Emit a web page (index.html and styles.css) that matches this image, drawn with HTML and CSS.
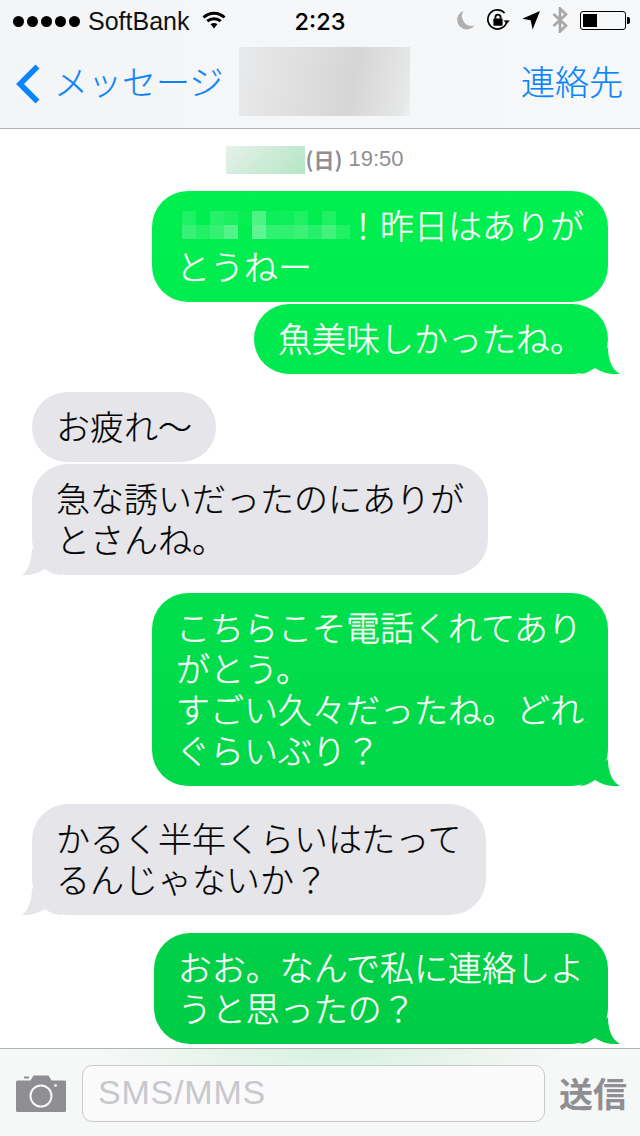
FILE: index.html
```html
<!DOCTYPE html>
<html lang="ja">
<head>
<meta charset="utf-8">
<title>メッセージ</title>
<link rel="stylesheet" href="styles.css">
</head>
<body>
<div class="phone">
  <header class="top">
    <div class="status">
      <div class="status-left">
        <div class="signal"><i></i><i></i><i></i><i></i><i></i></div>
        <span class="carrier">SoftBank</span>
        <svg class="wifi" width="24" height="18" viewBox="0 0 24 18"><path class="wifi-arc" d="M1.5 6.5C7.5 .9 16.5 .9 22.5 6.5"/><path class="wifi-arc" d="M5.3 10.2C9.2 6.8 14.8 6.8 18.7 10.2"/><path class="wifi-fill" d="M8.6 13.2C10.6 11.6 13.4 11.6 15.4 13.2L12 17.5Z"/></svg>
      </div>
      <div class="clock">2:23</div>
      <div class="status-right">
        <svg class="moon" width="20" height="20" viewBox="0 0 20 20"><path d="M8.5 .8A9.6 9.6 0 1 0 19.6 15.4 9.8 9.8 0 0 1 8.5 .8Z"/></svg>
        <svg class="rot" width="24" height="24" viewBox="0 0 24 24"><path class="rot-ring" d="M21 12.5A9.6 9.6 0 1 1 18.6 5"/><path class="rot-fill" d="M17.6 12.5h6.2l-3.1 3.6Z"/><rect class="rot-fill" x="7.4" y="10.6" width="9.2" height="7.2" rx=".8"/><path class="rot-shackle" d="M9.4 10.8V9.2a2.6 2.6 0 0 1 5.2 0v1.6"/></svg>
        <svg class="arrow" width="18" height="20" viewBox="0 0 18 20"><path d="M18 1 10.6 19.4 8.7 10.2 .2 8.8Z"/></svg>
        <svg class="bt" width="16" height="26" viewBox="0 0 16 26"><path d="M1.5 7 14 18.5 8 24.5V1.5L14 7.5 1.5 19"/></svg>
        <div class="battery"><div class="battery-body"><div class="battery-level"></div></div><div class="battery-nub"></div></div>
      </div>
    </div>
    <nav class="nav">
      <div class="back">
        <svg class="chevron" width="26" height="40" viewBox="0 0 26 40"><path d="M22.5 2.5 5 20 22.5 37.5"/></svg>
        <span class="nav-link back-label">メッセージ</span>
      </div>
      <div class="title-blur"></div>
      <span class="nav-link contacts">連絡先</span>
    </nav>
  </header>

  <main class="thread">
    <div class="stamp"><span class="stamp-blur"></span><b>(日)</b>&nbsp;19:50</div>

    <div class="bubble out first">
      <svg class="mosaic" width="170" height="28" viewBox="-2 0 170 28">
        <rect x="4" y="0" width="14" height="14" fill-opacity=".12"/>
        <rect x="32" y="0" width="14" height="14" fill-opacity=".15"/>
        <rect x="46" y="0" width="14" height="14" fill-opacity=".1"/>
        <rect x="60" y="0" width="14" height="14" fill-opacity=".03"/>
        <rect x="74" y="0" width="14" height="14" fill-opacity=".3"/>
        <rect x="88" y="0" width="14" height="14" fill-opacity=".05"/>
        <rect x="102" y="0" width="14" height="14" fill-opacity=".06"/>
        <rect x="116" y="0" width="14" height="14" fill-opacity=".12"/>
        <rect x="144" y="0" width="14" height="14" fill-opacity=".12"/>
        <rect x="4" y="14" width="14" height="14" fill-opacity=".22"/>
        <rect x="18" y="14" width="14" height="14" fill-opacity=".13"/>
        <rect x="32" y="14" width="14" height="14" fill-opacity=".2"/>
        <rect x="46" y="14" width="14" height="14" fill-opacity=".32"/>
        <rect x="74" y="14" width="14" height="14" fill-opacity=".38"/>
        <rect x="88" y="14" width="14" height="14" fill-opacity=".19"/>
        <rect x="102" y="14" width="14" height="14" fill-opacity=".18"/>
        <rect x="116" y="14" width="14" height="14" fill-opacity=".23"/>
        <rect x="130" y="14" width="14" height="14" fill-opacity=".15"/>
        <rect x="144" y="14" width="14" height="14" fill-opacity=".26"/>
        <rect x="158" y="14" width="14" height="14" fill-opacity=".12"/>
      </svg>！昨日はありが<br>とうねー
    </div>
    <div class="bubble out tight tailed">魚美味しかったね。</div>

    <div class="bubble in group">お疲れ〜</div>
    <div class="bubble in tight tailed">急な誘いだったのにありが<br>とさんね。</div>

    <div class="bubble out group tailed">こちらこそ電話くれてあり<br>がとう。<br>すごい久々だったね。どれ<br>ぐらいぶり？</div>

    <div class="bubble in group tailed">かるく半年くらいはたって<br>るんじゃないか？</div>

    <div class="bubble out group tailed">おお。なんで私に連絡しよ<br>うと思ったの？</div>
  </main>

  <footer class="composer">
    <svg class="camera" width="50" height="37" viewBox="0 0 50 37"><path class="camera-body" fill-rule="evenodd" d="M1.5 5.5H14.5L17.5 .5H32.5L35.5 5.5H48.5A1.5 1.5 0 0 1 50 7V35.5A1.5 1.5 0 0 1 48.5 37H1.5A1.5 1.5 0 0 1 0 35.5V7A1.5 1.5 0 0 1 1.5 5.5ZM25 9.5A11.5 11.5 0 1 0 25 32.5 11.5 11.5 0 1 0 25 9.5ZM25 11.5A9.5 9.5 0 1 1 25 30.5 9.5 9.5 0 1 1 25 11.5Z"/><rect class="camera-body" x="8" y="1.5" width="5" height="2"/><circle class="camera-dot" cx="39.5" cy="10.5" r="1.4"/></svg>
    <div class="field">SMS/MMS</div>
    <span class="send">送信</span>
  </footer>
</div>
</body>
</html>
```
FILE: styles.css
```css
* { box-sizing: border-box; }
html, body { margin: 0; padding: 0; background: #fff; }
body { font-family: "Noto Sans CJK JP", "Liberation Sans", sans-serif; }
.phone { width: 640px; height: 1136px; display: flex; flex-direction: column; overflow: hidden; }

.top { height: 129px; flex: none; background: linear-gradient(90deg, #f4f5f6, #f7f8f9); border-bottom: 1px solid #b4b4b4; }
.status { height: 40px; padding: 3px 10px 0 13px; display: grid; grid-template-columns: 1fr auto 1fr; align-items: center; }
.status-left { display: flex; align-items: center; }
.signal { display: flex; gap: 3px; }
.signal i { width: 11px; height: 11px; border-radius: 50%; background: #000; }
.carrier { font: 25px "Liberation Sans", sans-serif; margin-left: 8px; color: #111; }
.wifi { margin: -3px 0 0 13px; }
.wifi-arc { fill: none; stroke: #000; stroke-width: 3; }
.wifi-fill { fill: #000; }
.clock { font: 500 23.5px Inter, "Liberation Sans", sans-serif; color: #000; margin-left: -3px; }
.status-right { display: flex; justify-content: flex-end; align-items: center; gap: 12px; margin-top: -3px; }
.moon { margin-right: -1px; }
.moon path { fill: #b0b0b0; }
.rot-ring { fill: none; stroke: #000; stroke-width: 1.7; }
.rot-fill { fill: #000; }
.rot-shackle { fill: none; stroke: #000; stroke-width: 1.8; }
.arrow path { fill: #000; }
.bt path { fill: none; stroke: #a6a6a6; stroke-width: 2.6; }
.battery { display: flex; align-items: center; }
.battery-body { width: 46px; height: 19px; border: 1px solid #000; border-radius: 3px; padding: 2px; }
.battery-level { width: 14px; height: 100%; background: #000; }
.battery-nub { width: 3px; height: 7px; background: #000; border-radius: 0 2px 2px 0; margin-left: 1px; }

.nav { height: 88px; display: flex; align-items: center; padding: 0 17px 0 15px; }
.back { display: flex; align-items: center; width: 224px; }
.chevron { flex: none; }
.chevron path { fill: none; stroke: #0a84fb; stroke-width: 5.6; }
.nav-link { font-size: 34px; font-weight: 300; -webkit-text-stroke: .2px #0a84fb; line-height: 40px; padding-bottom: 6px; color: #0a84fb; white-space: nowrap; }
.back-label { margin-left: 13px; }
.contacts { margin-left: auto; }
.title-blur { width: 171px; height: 69px; margin-bottom: 5px; flex: none; background: linear-gradient(100deg, #e9eaeb 0, #dcdcdd 45%, #d5d5d5 65%, #e6e7e7 95%, #eeeff0 100%); }

.thread { flex: 1; min-height: 0; overflow: hidden; background: #fff; padding: 17px 32px 0; display: flex; flex-direction: column; }
.stamp { height: 28px; margin-bottom: 17px; display: flex; justify-content: center; align-items: center; font: 22px "Liberation Sans", "Noto Sans CJK JP", sans-serif; color: #8e8e93; padding: 0 10px 2px 0; }
.stamp b { font-family: "Noto Sans CJK JP", sans-serif; font-size: 21px; }
.stamp-blur { width: 79px; height: 28px; margin-bottom: -2px; background: linear-gradient(135deg, #e6f1ea, #b4e6c4); }

.bubble { position: relative; flex: none; font-size: 34px; font-weight: 300; line-height: 41px; padding: 12.5px 24px 16.5px; border-radius: 36px; white-space: nowrap; }
.out { align-self: flex-end; color: #fff; -webkit-text-stroke: .35px #fff; background: linear-gradient(180deg, #00f252 0, #00f050 191px, #00cc46 1044px) fixed; }
.in { align-self: flex-start; color: #000; -webkit-text-stroke: .2px #000; background: #e5e5ea; }
.first { margin-top: 0; }
.tight { margin-top: 2px; }
.group { margin-top: 18px; }
.mosaic { vertical-align: 0; overflow: visible; }
.mosaic rect { fill: #fff; }

.tailed::after { content: ""; position: absolute; bottom: 0; width: 40px; height: 30px; }
.out.tailed::after { right: -12px; background: inherit; background-attachment: fixed; clip-path: path("M28 3C28 14 31 25 40 30C31 31 23 29 15 24C10 27 5 30 0 30Z"); }
.in.tailed::after { left: -10px; background: #e5e5ea; clip-path: path("M10 3C10 14 7 25 0 30C7 30.5 15 29 23 24C27 27 33 30 40 30Z"); }

.composer { height: 88px; flex: none; display: flex; align-items: center; padding: 1px 13px 0 16px; border-top: 1px solid #b2b2b2; background: radial-gradient(ellipse 230px 52px at 52% 0, #d6f2e0, rgba(220,243,228,0)), #f6f7f7; }
.camera { flex: none; }
.camera-body { fill: #8e8e93; }
.camera-dot { fill: #f6f7f7; }
.field { flex: 1; height: 57px; margin-left: 16px; padding-left: 15px; border: 1px solid #c8c8ce; border-radius: 10px; background: #fafafb; color: #c7c7cd; font: 34px/53px "Liberation Sans", sans-serif; letter-spacing: .8px; }
.send { margin-left: 14px; font-size: 34px; font-weight: 700; line-height: 40px; color: #8e8e93; }
```
